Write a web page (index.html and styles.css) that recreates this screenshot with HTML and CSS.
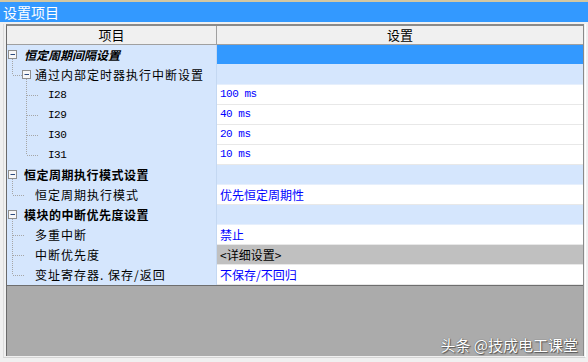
FILE: index.html
```html
<!DOCTYPE html>
<html lang="zh">
<head>
<meta charset="utf-8">
<link rel="stylesheet" href="styles.css">
</head>
<body>
<div class="topline"></div>
<div class="title">设置项目</div>
<div class="frame">
  <div class="table">
    <div class="head">
      <div class="hcell left">项目</div>
      <div class="hcell right">设置</div>
    </div>

    <div class="row">
      <div class="lc"><svg class="g" width="16" height="20"><rect x="1.5" y="5.5" width="8" height="8" class="box"/><line x1="3.5" y1="9.5" x2="8" y2="9.5" class="minus"/><line x1="5.5" y1="14" x2="5.5" y2="20" class="dot"/></svg><span class="grp it">恒定周期间隔设置</span></div>
      <div class="rc sel"></div>
    </div>
    <div class="row">
      <div class="lc"><svg class="g" width="28" height="20"><line x1="5.5" y1="0" x2="5.5" y2="10" class="dot"/><line x1="6" y1="10.5" x2="15" y2="10.5" class="dot"/><rect x="15.5" y="5.5" width="8" height="8" class="box"/><line x1="17.5" y1="9.5" x2="22" y2="9.5" class="minus"/><line x1="19.5" y1="14" x2="19.5" y2="20" class="dot"/></svg><span class="lbl">通过内部定时器执行中断设置</span></div>
      <div class="rc grpbg"></div>
    </div>
    <div class="row">
      <div class="lc"><svg class="g" width="41" height="20"><line x1="19.5" y1="0" x2="19.5" y2="20" class="dot"/><line x1="20" y1="10.5" x2="31" y2="10.5" class="dot"/></svg><span class="mono">I28</span></div>
      <div class="rc"><span class="val mono">100 ms</span></div>
    </div>
    <div class="row">
      <div class="lc"><svg class="g" width="41" height="20"><line x1="19.5" y1="0" x2="19.5" y2="20" class="dot"/><line x1="20" y1="10.5" x2="31" y2="10.5" class="dot"/></svg><span class="mono">I29</span></div>
      <div class="rc"><span class="val mono">40 ms</span></div>
    </div>
    <div class="row">
      <div class="lc"><svg class="g" width="41" height="20"><line x1="19.5" y1="0" x2="19.5" y2="20" class="dot"/><line x1="20" y1="10.5" x2="31" y2="10.5" class="dot"/></svg><span class="mono">I30</span></div>
      <div class="rc"><span class="val mono">20 ms</span></div>
    </div>
    <div class="row">
      <div class="lc"><svg class="g" width="41" height="20"><line x1="19.5" y1="0" x2="19.5" y2="10" class="dot"/><line x1="20" y1="10.5" x2="31" y2="10.5" class="dot"/></svg><span class="mono">I31</span></div>
      <div class="rc"><span class="val mono">10 ms</span></div>
    </div>

    <div class="row">
      <div class="lc"><svg class="g" width="16" height="20"><rect x="1.5" y="5.5" width="8" height="8" class="box"/><line x1="3.5" y1="9.5" x2="8" y2="9.5" class="minus"/><line x1="5.5" y1="14" x2="5.5" y2="20" class="dot"/></svg><span class="grp">恒定周期执行模式设置</span></div>
      <div class="rc grpbg"></div>
    </div>
    <div class="row">
      <div class="lc"><svg class="g" width="28" height="20"><line x1="5.5" y1="0" x2="5.5" y2="10" class="dot"/><line x1="6" y1="10.5" x2="18" y2="10.5" class="dot"/></svg><span class="lbl">恒定周期执行模式</span></div>
      <div class="rc"><span class="val">优先恒定周期性</span></div>
    </div>

    <div class="row">
      <div class="lc"><svg class="g" width="16" height="20"><rect x="1.5" y="5.5" width="8" height="8" class="box"/><line x1="3.5" y1="9.5" x2="8" y2="9.5" class="minus"/><line x1="5.5" y1="14" x2="5.5" y2="20" class="dot"/></svg><span class="grp">模块的中断优先度设置</span></div>
      <div class="rc grpbg"></div>
    </div>
    <div class="row">
      <div class="lc"><svg class="g" width="28" height="20"><line x1="5.5" y1="0" x2="5.5" y2="20" class="dot"/><line x1="6" y1="10.5" x2="18" y2="10.5" class="dot"/></svg><span class="lbl">多重中断</span></div>
      <div class="rc"><span class="val">禁止</span></div>
    </div>
    <div class="row">
      <div class="lc"><svg class="g" width="28" height="20"><line x1="5.5" y1="0" x2="5.5" y2="20" class="dot"/><line x1="6" y1="10.5" x2="18" y2="10.5" class="dot"/></svg><span class="lbl">中断优先度</span></div>
      <div class="rc btn"><span class="val dark">&lt;详细设置&gt;</span></div>
    </div>
    <div class="row">
      <div class="lc"><svg class="g" width="28" height="20"><line x1="5.5" y1="0" x2="5.5" y2="10" class="dot"/><line x1="6" y1="10.5" x2="18" y2="10.5" class="dot"/></svg><span class="lbl">变址寄存器. 保存/返回</span></div>
      <div class="rc"><span class="val">不保存/不回归</span></div>
    </div>

    <div class="empty">
      <span class="watermark">头条 @技成电工课堂</span>
    </div>
  </div>
</div>
</body>
</html>
```

FILE: styles.css
```css
html, body {
  margin: 0;
  padding: 0;
}
body {
  width: 588px;
  height: 362px;
  overflow: hidden;
  background: #f0f0f0;
  font-family: "Noto Sans CJK SC", "Liberation Sans", sans-serif;
  font-size: 13px;
  color: #000;
}
.topline {
  height: 2px;
  background: #d3c7a2;
}
.title {
  height: 20px;
  line-height: 20px;
  background: #3399ff;
  color: #fff;
  font-size: 14px;
  padding-left: 3px;
}
.frame {
  margin: 2px 2px 0 3px;
  border-left: 1px solid #dcdcdc;
  border-right: 1px solid #ffffff;
  border-bottom: 1px solid #d4d4d4;
  padding: 0 1px 1px 2px;
}
.table {
  height: 332px;
  box-sizing: border-box;
  border-left: 1px solid #6a6a6a;
  border-top: 2px solid #8a8a8a;
  border-right: 1px solid #8a8a8a;
  display: flex;
  flex-direction: column;
  background: #ababab;
}
.head {
  display: flex;
  height: 19px;
  box-sizing: border-box;
  border-bottom: 1px solid #a0a0a0;
  background: #f0f0f0;
}
.hcell {
  line-height: 18px;
  text-align: center;
}
.hcell.left {
  width: 209px;
  border-right: 1px solid #a0a0a0;
}
.hcell.right {
  flex: 1;
}
.row {
  display: flex;
  height: 20px;
}
.lc {
  width: 209px;
  border-right: 1px solid #c4d8f2;
  background: #d5e6fd;
  display: flex;
  align-items: center;
  line-height: 20px;
  white-space: nowrap;
}
.g {
  flex: none;
  display: block;
}
.box {
  fill: #f7f7f7;
  stroke: #8e8e8e;
  stroke-width: 1;
}
.minus {
  stroke: #2a4a80;
  stroke-width: 1;
}
.dot {
  stroke: #a6a6a6;
  stroke-width: 1;
  stroke-dasharray: 1 1;
}
.grp {
  font-weight: bold;
  font-size: 12px;
  letter-spacing: 0.5px;
  padding-left: 1px;
}
.grp.it {
  font-style: italic;
  letter-spacing: 0;
}
.lbl {
  font-size: 12px;
  letter-spacing: 1px;
}
.mono {
  font-family: "Liberation Mono", "DejaVu Sans Mono", monospace;
  font-size: 11px;
  letter-spacing: -0.5px;
}
.rc {
  flex: 1;
  box-sizing: border-box;
  background: #fff;
  border-bottom: 1px solid #e8e8e8;
  display: flex;
  align-items: center;
  padding-left: 3px;
  line-height: 19px;
  white-space: nowrap;
}
.rc.sel {
  background: #3399ff;
  border-bottom-color: #d5e6fd;
}
.rc.grpbg {
  background: #d5e6fd;
  border-bottom-color: #e6effc;
}
.rc.btn {
  background: #c0c0c0;
  border-bottom-color: #e8e8e8;
}
.val {
  color: #0000ff;
  font-size: 12px;
}
.val.dark {
  color: #000;
}
.val.mono {
  font-size: 11px;
}
.empty {
  flex: 1;
  position: relative;
  border-top: 1px solid #6e6e6e;
  background: #ababab;
}
.watermark {
  position: absolute;
  right: 5px;
  bottom: 2px;
  color: #fff;
  font-size: 15px;
  line-height: 18px;
  text-shadow: 0 0 1px #444, 1px 1px 1px #555;
  white-space: nowrap;
}
```
